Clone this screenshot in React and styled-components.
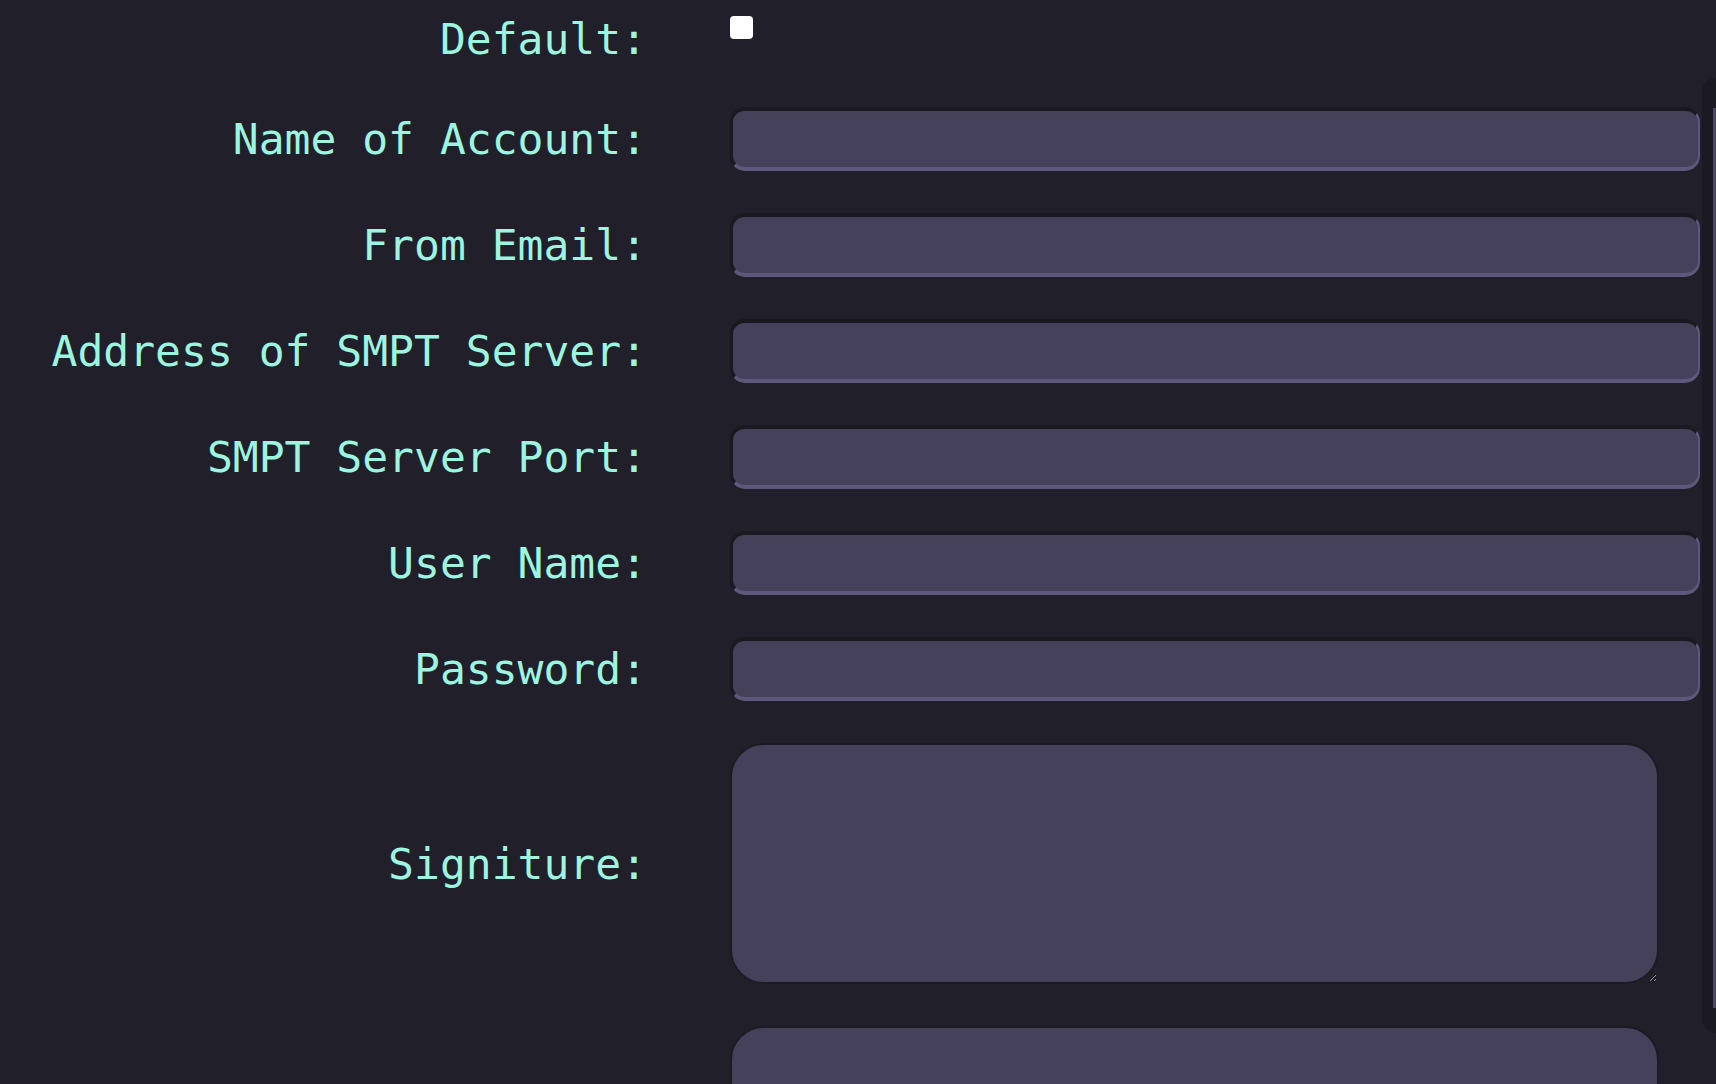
import React from 'react';
import styled, { createGlobalStyle } from 'styled-components';

const GlobalStyle = createGlobalStyle`
  html, body {
    margin: 0;
    padding: 0;
    background: #211f2a;
  }
  * {
    box-sizing: border-box;
  }
`;

const PageStyles = styled.div`
  display: flex;
  align-items: flex-start;
  width: 1716px;
  min-height: 1084px;
  background: #211f2a;
  font-family: 'DejaVu Sans Mono', 'Liberation Mono', monospace;
`;

const Form = styled.form`
  flex: 0 0 1702px;
  display: flex;
  flex-direction: column;
  gap: 42px;
  padding: 13px 2px 0 0;
`;

const Row = styled.div`
  display: flex;
  align-items: ${({ $top }) => ($top ? 'flex-start' : 'center')};
  gap: 83px;
`;

const Label = styled.label`
  flex: 0 0 647px;
  text-align: right;
  color: #9df5e0;
  font-size: 43px;
  line-height: 52px;
  white-space: nowrap;
`;

const Check = styled.input`
  appearance: none;
  margin: 3px 0 0 0;
  width: 23px;
  height: 23px;
  border-radius: 4px;
  background: #ffffff;
`;

const Field = styled.input`
  width: 970px;
  height: 64px;
  padding: 0 16px;
  border-radius: 15px;
  border-width: 4px 2px 4px 3px;
  border-style: solid;
  border-color: #1a1920 #5e597c #5e597c #1a1920;
  background: #45415a;
  color: #9df5e0;
  font: inherit;
  font-size: 28px;
  outline: none;
`;

const Area = styled.textarea`
  width: 929px;
  height: 241px;
  padding: 16px 24px;
  border: 2px solid #1c1b23;
  border-radius: 34px;
  background: #45415a;
  color: #9df5e0;
  font: inherit;
  font-size: 28px;
  outline: none;
`;

const Side = styled.div`
  flex: 0 0 14px;
  margin-top: 78px;
  height: 955px;
  display: flex;
  justify-content: flex-end;
  padding-top: 30px;
  border-radius: 14px 0 0 14px;
  background: #1b1a22;
`;

const Strip = styled.div`
  width: 3px;
  height: 900px;
  background: #4c4866;
`;

const fields = [
  'Name of Account:',
  'From Email:',
  'Address of SMPT Server:',
  'SMPT Server Port:',
  'User Name:',
  'Password:',
];

export default function App() {
  return (
    <>
      <GlobalStyle />
      <PageStyles>
        <Form>
          <Row $top>
            <Label>Default:</Label>
            <Check type="checkbox" />
          </Row>
          {fields.map((f) => (
            <Row key={f}>
              <Label>{f}</Label>
              <Field type={f === 'Password:' ? 'password' : 'text'} />
            </Row>
          ))}
          <Row>
            <Label>Signiture:</Label>
            <Area />
          </Row>
          <Row>
            <Label />
            <Area />
          </Row>
        </Form>
        <Side>
          <Strip />
        </Side>
      </PageStyles>
    </>
  );
}
